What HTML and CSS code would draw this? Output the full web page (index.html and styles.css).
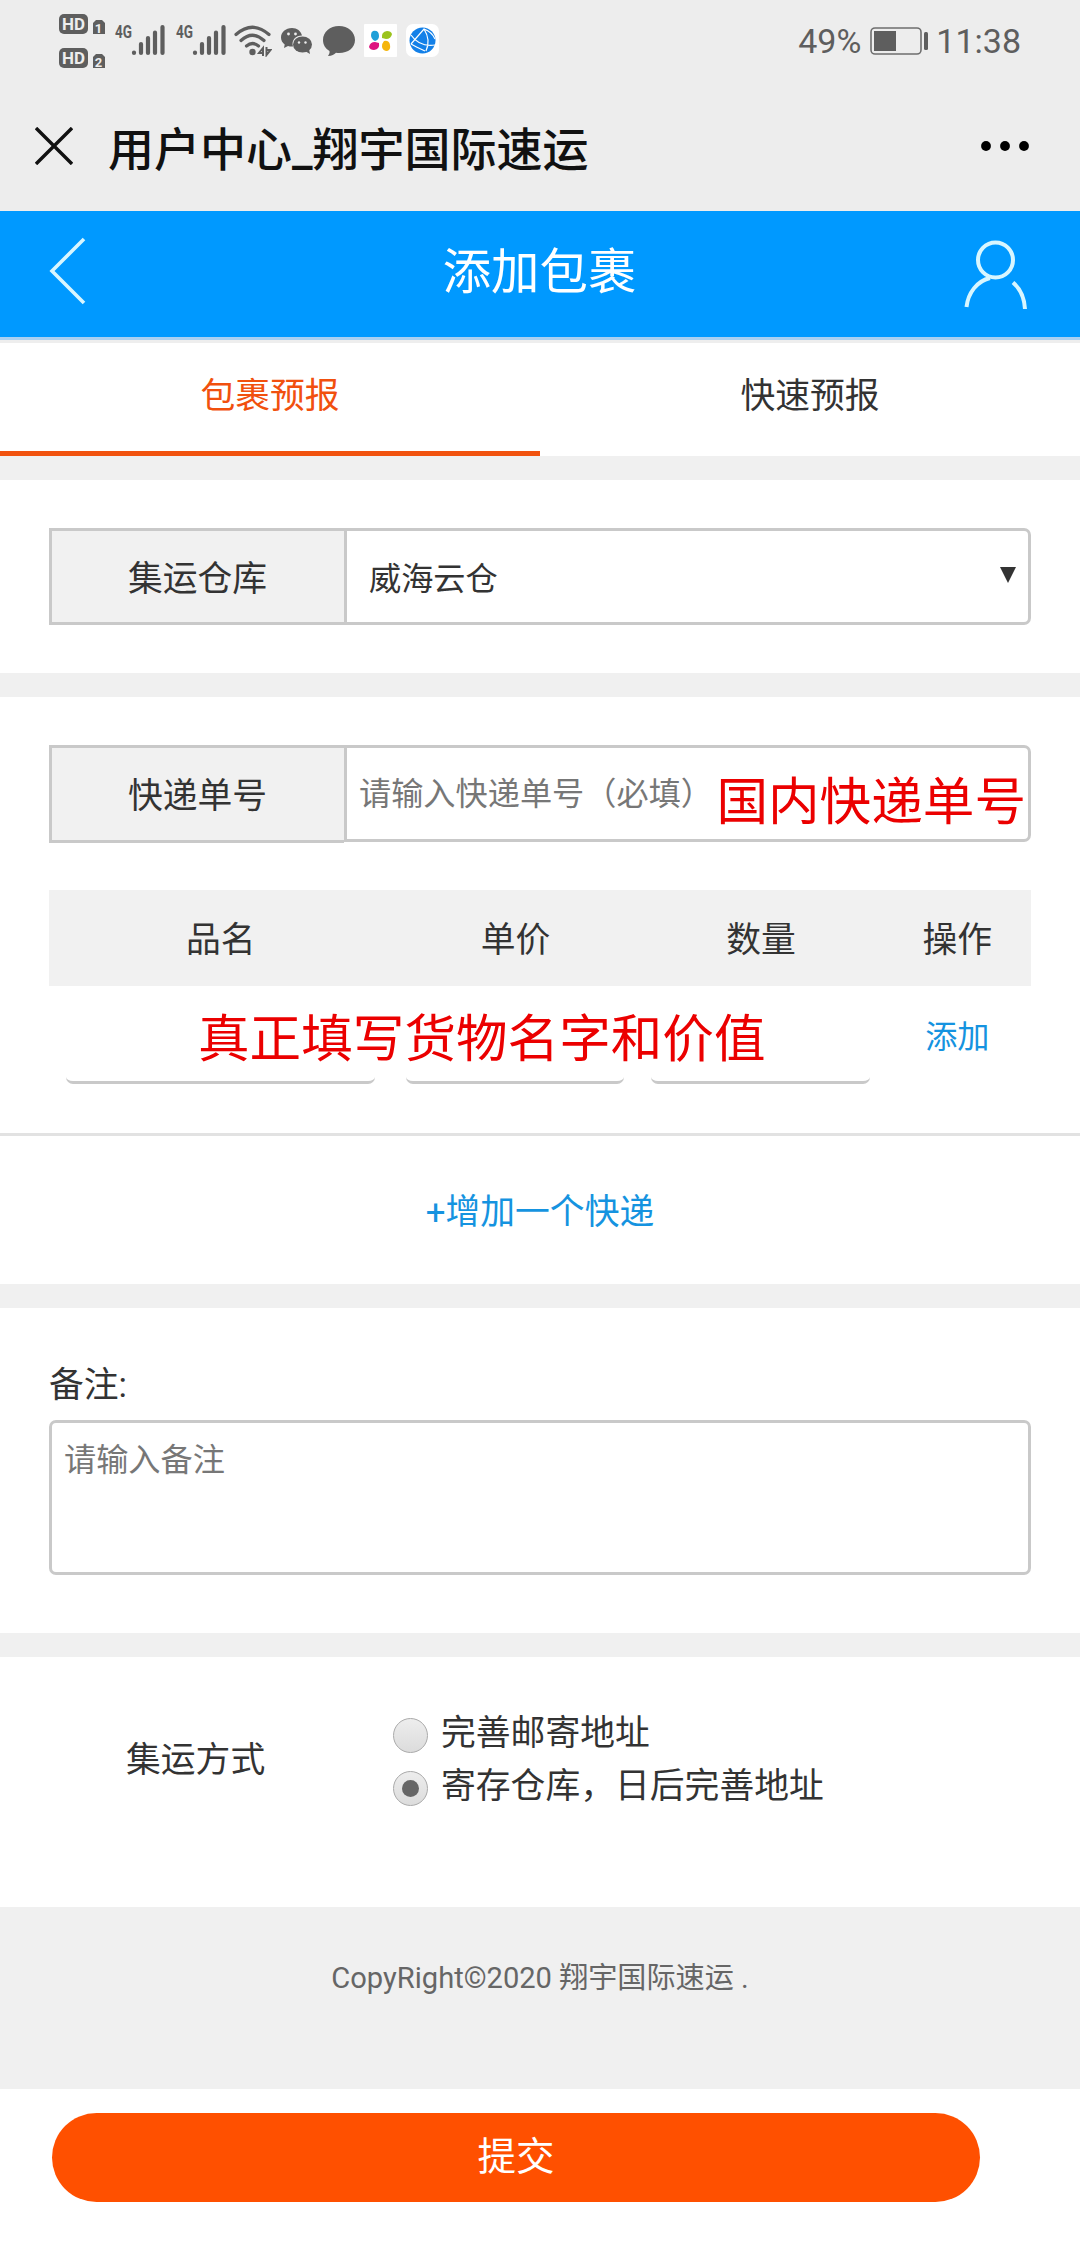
FILE: index.html
```html
<!DOCTYPE html>
<html lang="zh-CN">
<head>
    <meta charset="UTF-8">
    <meta name="viewport" content="width=device-width, initial-scale=1.0">
    <title>用户中心_翔宇国际速运</title>
    <link rel="stylesheet" href="styles.css">
</head>
<body>
    <div class="status-bar">
        <svg class="icon-hd" width="46" height="56" viewBox="0 0 46 56">
            <rect width="29" height="20" rx="5" fill="#5e5e5e"/>
            <text x="14.5" y="16" class="hd-text" textLength="23" lengthAdjust="spacingAndGlyphs">HD</text>
            <path d="M37 6h6l3 3v11H34V9z" fill="#5e5e5e"/>
            <text x="39.5" y="18.500" class="sim-text">1</text>
            <rect y="34" width="29" height="20" rx="5" fill="#5e5e5e"/>
            <text x="14.5" y="50" class="hd-text" textLength="23" lengthAdjust="spacingAndGlyphs">HD</text>
            <path d="M37 40h6l3 3v11H34V43z" fill="#5e5e5e"/>
            <text x="39.5" y="52.500" class="sim-text">2</text>
        </svg>
        <svg class="icon-signal" width="51" height="36" viewBox="0 -4 51 36">
            <text x="0" y="14" class="net-text" textLength="17" lengthAdjust="spacingAndGlyphs">4G</text>
            <path d="M19 28.500v.5M26 20v9M33 14v15M40 8.500v20.500M47.500 3v26" stroke="#5e5e5e" stroke-width="4.200" stroke-linecap="round"/>
        </svg>
        <svg class="icon-signal" width="51" height="36" viewBox="0 -4 51 36">
            <text x="0" y="14" class="net-text" textLength="17" lengthAdjust="spacingAndGlyphs">4G</text>
            <path d="M19 28.500v.5M26 20v9M33 14v15M40 8.500v20.500M47.500 3v26" stroke="#5e5e5e" stroke-width="4.200" stroke-linecap="round"/>
        </svg>
        <svg class="icon-wifi" width="38" height="32" viewBox="0 0 38 32">
            <g fill="none" stroke="#5e5e5e" stroke-width="3.200" stroke-linecap="round">
                <path d="M2 9.500Q18.500-5 35 9.500"/>
                <path d="M7 15.500Q18.500 5 30 15.500"/>
                <path d="M12.500 21Q18.500 16 24.500 21"/>
            </g>
            <circle cx="18.500" cy="27" r="3.200" fill="#5e5e5e"/>
            <path d="M29 31v-8l-4 5h4M32.500 22v8l4-5h-4" fill="none" stroke="#5e5e5e" stroke-width="2"/>
        </svg>
        <svg class="icon-wechat" width="32" height="28" viewBox="0 0 32 28">
            <path d="M11 0C4.500 0 0 4.300 0 9.500c0 3 1.400 5.300 3.700 7L3 20l4-2c1.500.4 3 .6 5 .5C10 12 15 7.500 21 7.500 20 3 16 0 11 0z" fill="#5e5e5e"/>
            <ellipse cx="21.500" cy="16.500" rx="9.500" ry="8" fill="#5e5e5e"/>
            <path d="M24 23l5 3-1-5z" fill="#5e5e5e"/>
            <g fill="#ededed">
                <circle cx="7.500" cy="6" r="1.400"/>
                <circle cx="14.500" cy="6" r="1.400"/>
                <circle cx="18" cy="14.500" r="1.200"/>
                <circle cx="24.500" cy="14.500" r="1.200"/>
            </g>
        </svg>
        <svg class="icon-message" width="32" height="31" viewBox="0 0 32 31">
            <path d="M16 0C7 0 0 6 0 14c0 5 2.500 8.500 6.500 11 .3 2-.5 3.500-1.500 5 4-.2 6-1.500 8-3.300 10.500 1.300 19-4 19-12.700C32 6 25 0 16 0z" fill="#5e5e5e"/>
        </svg>
        <svg class="icon-app" width="33" height="33" viewBox="0 0 33 33">
            <rect width="33" height="33" rx="1" fill="#fff"/>
            <path d="M9 7q6-1 6 5 0 4-4 5-4-2-4-6 0-3 2-4z" fill="#1e9fd8"/>
            <path d="M18 14q-1-6 5-7 4 0 5 3-1 5-6 5z" fill="#9bc31c"/>
            <path d="M15 19q1 6-5 7-4 0-5-3 1-5 6-5z" fill="#dd1480"/>
            <path d="M20 17q5-1 6 4 1 5-3 6-4 0-5-4 0-4 2-6z" fill="#f5b50a"/>
        </svg>
        <svg class="icon-browser" width="33" height="33" viewBox="0 0 33 33">
            <rect width="33" height="33" rx="7" fill="#fff"/>
            <circle cx="16.500" cy="16.500" r="13" fill="#1380e8"/>
            <path d="M5 20L18 5q7 11 2 22M5 11q8 12 24 10M18 5q8 3 11 10M5 20q5 3 14 7" fill="none" stroke="#fff" stroke-width="1.200"/>
        </svg>
        <span class="battery-text">49%</span>
        <svg class="icon-battery" width="58" height="28" viewBox="0 0 58 28">
            <rect x="1" y="1" width="50" height="26" rx="4" fill="none" stroke="#6e6e6e" stroke-width="1.600"/>
            <rect x="4" y="4" width="22" height="20" fill="#5e5e5e"/>
            <rect x="54" y="5" width="4" height="18" rx="1.500" fill="#5e5e5e"/>
        </svg>
        <span class="clock">11:38</span>
    </div>

    <div class="title-bar">
        <svg class="icon-close" width="38" height="38" viewBox="0 0 38 38">
            <path d="M1 1l36 36M37 1L1 37" stroke="#111" stroke-width="3.400"/>
        </svg>
        <div class="page-title">用户中心_翔宇国际速运</div>
        <svg class="icon-more" width="48" height="10" viewBox="0 0 48 10">
            <circle cx="5" cy="5" r="4.900"/>
            <circle cx="24" cy="5" r="4.900"/>
            <circle cx="43" cy="5" r="4.900"/>
        </svg>
    </div>

    <header class="header">
        <svg class="icon-back" width="38" height="68" viewBox="0 0 38 68">
            <path d="M35 2L3 34l32 32" fill="none" stroke="#d8f6ff" stroke-width="3.600"/>
        </svg>
        <h1>添加包裹</h1>
        <svg class="icon-user" width="64" height="70" viewBox="0 0 64 70">
            <g fill="none" stroke="#d8f6ff" stroke-width="4">
                <circle cx="31.500" cy="20" r="17.500"/>
                <path d="M26 38C13 41 4 53 2.500 67M49 42.500Q60 52 61 69"/>
            </g>
        </svg>
    </header>

    <nav class="tabs">
        <div class="tab active">包裹预报</div>
        <div class="tab">快速预报</div>
    </nav>

    <section class="section warehouse">
        <div class="field">
            <div class="field-label">集运仓库</div>
            <div class="field-input select">
                <span>威海云仓</span>
                <svg width="16" height="16" viewBox="0 0 16 16"><path d="M0 0h16L8 16z" fill="#333"/></svg>
            </div>
        </div>
    </section>

    <section class="section express">
        <div class="field">
            <div class="field-label tall">快递单号</div>
            <div class="field-input placeholder">请输入快递单号（必填）</div>
            <div class="note note-number">国内快递单号</div>
        </div>
        <div class="goods">
            <div class="goods-row goods-head">
                <div>品名</div>
                <div>单价</div>
                <div>数量</div>
                <div>操作</div>
            </div>
            <div class="goods-row goods-body">
                <div class="goods-input input-name"></div>
                <div class="goods-input input-price"></div>
                <div class="goods-input input-count"></div>
                <a class="add">添加</a>
            </div>
            <div class="note note-goods">真正填写货物名字和价值</div>
        </div>
        <a class="add-express">+增加一个快递</a>
    </section>

    <section class="section remark">
        <div class="remark-label">备注:</div>
        <div class="textarea">请输入备注</div>
    </section>

    <section class="section method">
        <div class="method-label">集运方式</div>
        <div class="options">
            <div class="option"><span class="radio"></span>完善邮寄地址</div>
            <div class="option"><span class="radio checked"></span>寄存仓库，日后完善地址</div>
        </div>
    </section>

    <footer class="footer">CopyRight©2020 翔宇国际速运 .</footer>

    <div class="submit-bar">
        <div class="submit">提交</div>
    </div>
</body>
</html>
```

FILE: styles.css
```css
* {
    box-sizing: border-box;
}

body {
    margin: 0;
    width: 1080px;
    height: 2244px;
    overflow: hidden;
    background: #f0f0f0;
    font-family: Roboto, "Noto Sans CJK SC", sans-serif;
    font-size: 34.8px;
    color: #333;
}

svg {
    display: block;
    flex-shrink: 0;
}

/* 系统状态栏 */
.status-bar {
    display: flex;
    align-items: flex-start;
    height: 84px;
    padding: 14px 59px 0;
    background: #ededed;
}

.hd-text {
    font: bold 16px Roboto, sans-serif;
    fill: #ededed;
    text-anchor: middle;
}

.sim-text {
    font: bold 13px Roboto, sans-serif;
    fill: #ededed;
    text-anchor: middle;
}

.net-text {
    font: bold 18px Roboto, sans-serif;
    fill: #5e5e5e;
}

.icon-signal {
    margin: 6px 0 0 10px;
    overflow: visible;
}

.icon-wifi {
    margin: 11px 0 0 7px;
}

.icon-wechat {
    margin: 14px 0 0 9px;
}

.icon-message {
    margin: 12px 0 0 10px;
}

.icon-app {
    margin: 10px 0 0 9px;
}

.icon-browser {
    margin: 10px 0 0 9px;
}

.battery-text,
.clock {
    margin-top: 7px;
    font-size: 34px;
    line-height: 40px;
    color: #5e5e5e;
}

.battery-text {
    margin-left: auto;
}

.icon-battery {
    margin: 13px 8px 0 9px;
}

/* 微信标题栏 */
.title-bar {
    display: flex;
    align-items: center;
    height: 127px;
    padding: 0 51px 3px 35px;
    background: #ededed;
}

.page-title {
    flex: 1;
    margin: 0 0 0 35px;
    padding-top: 7px;
    font-size: 46px;
    font-weight: 500;
    line-height: 60px;
    color: #111;
}

.header {
    display: flex;
    align-items: center;
    justify-content: space-between;
    height: 129px;
    padding: 0 52px 7px 49px;
    background: #0099ff;
    border-bottom: 3px solid #a9d0f2;
}

.header h1 {
    margin: 0;
    padding: 0 0 5px 28px;
    font-size: 48.400px;
    font-weight: 400;
    color: #fff;
}

.icon-user {
    margin-top: 8px;
}

.tabs {
    display: flex;
    height: 116px;
    background: #fff;
    border-top: 3px solid #eee;
}

.tab {
    flex: 1;
    padding-top: 28px;
    line-height: 50px;
    text-align: center;
}

.tab.active {
    color: #f1500e;
    border-bottom: 5px solid #f1530f;
}

.section {
    margin-top: 24px;
    background: #fff;
}

/* 表单行 */
.field {
    position: relative;
    display: flex;
    align-items: flex-start;
    margin: 0 49px;
}

.field-label {
    width: 295px;
    height: 97px;
    padding-right: 1px;
    border: 3px solid #c9c9c9;
    border-right: 0;
    background: #f1f1f1;
    line-height: 96px;
    text-align: center;
}

.field-label.tall {
    height: 98px;
}

.field-input {
    flex: 1;
    display: flex;
    align-items: center;
    justify-content: space-between;
    height: 97px;
    padding: 0 12px 2px;
    border: 3px solid #c9c9c9;
    border-radius: 0 7px 7px 0;
    font-size: 32.200px;
}

.select {
    padding: 0 12px 2px 22px;
}

.select svg {
    margin-top: -1px;
}

.placeholder {
    padding-bottom: 5px;
    color: #777;
}

.warehouse {
    height: 193px;
    padding-top: 48px;
}

.express {
    height: 587px;
    padding-top: 48px;
}

.goods {
    position: relative;
    height: 246px;
    margin: 47px 0 0;
    padding: 0 49px;
    border-bottom: 3px solid #e2e2e2;
}

.goods-row {
    display: grid;
    grid-template-columns: 35% 25% 25% 15%;
    text-align: center;
}

.goods-head {
    height: 96px;
    line-height: 100px;
    background: #f1f1f1;
}

.goods-body {
    height: 98px;
    align-items: end;
}

.goods-input {
    height: 12px;
    border-bottom: 3px solid #c9c9c9;
    border-radius: 0 0 7px 7px;
}

.input-name {
    margin: 0 18px 0 17px;
}

.input-price,
.input-count {
    margin: 0 14px 0 13px;
}

.add,
.add-express {
    color: #1593e0;
}

.add {
    align-self: center;
    padding-top: 4px;
    font-size: 32.200px;
    line-height: 48px;
}

.add-express {
    display: block;
    padding-top: 51px;
    line-height: 50px;
    text-align: center;
}

/* 红色批注文字，盖在表单上面 */
.note {
    position: absolute;
    font-size: 51.600px;
    line-height: 70px;
    white-space: nowrap;
    color: #eb0000;
}

.note-number {
    top: 23px;
    right: 5px;
}

.note-goods {
    top: 115px;
    left: 198px;
}

.remark {
    height: 325px;
    padding: 52px 49px 0;
}

.remark-label {
    height: 60px;
    line-height: 50px;
}

.textarea {
    height: 155px;
    padding: 13px 12px;
    border: 3px solid #c9c9c9;
    border-radius: 7px;
    font-size: 32.200px;
    line-height: 48px;
    color: #777;
}

.method {
    display: flex;
    height: 250px;
    padding: 50px 49px 0;
}

.method-label {
    width: 344px;
    padding: 28px 0 0 77px;
    line-height: 50px;
}

.option {
    display: flex;
    align-items: center;
    height: 53px;
    line-height: 51px;
}

.radio {
    display: flex;
    align-items: center;
    justify-content: center;
    width: 35px;
    height: 35px;
    margin: 4px 13px 0 0;
    border: 1.500px solid #aaa;
    border-radius: 50%;
    background: linear-gradient(#ededed, #dcdcdc);
}

.radio.checked::after {
    content: "";
    width: 17px;
    height: 17px;
    border-radius: 50%;
    background: #666;
}

.footer {
    height: 182px;
    padding-top: 48px;
    font-size: 29.100px;
    line-height: 46px;
    text-align: center;
    color: #666;
}

.submit-bar {
    height: 155px;
    padding: 24px 100px 0 52px;
    background: #fff;
}

.submit {
    height: 89px;
    border-radius: 45px;
    background: #ff5000;
    font-size: 38.500px;
    line-height: 87px;
    text-align: center;
    color: #fff;
}
```
